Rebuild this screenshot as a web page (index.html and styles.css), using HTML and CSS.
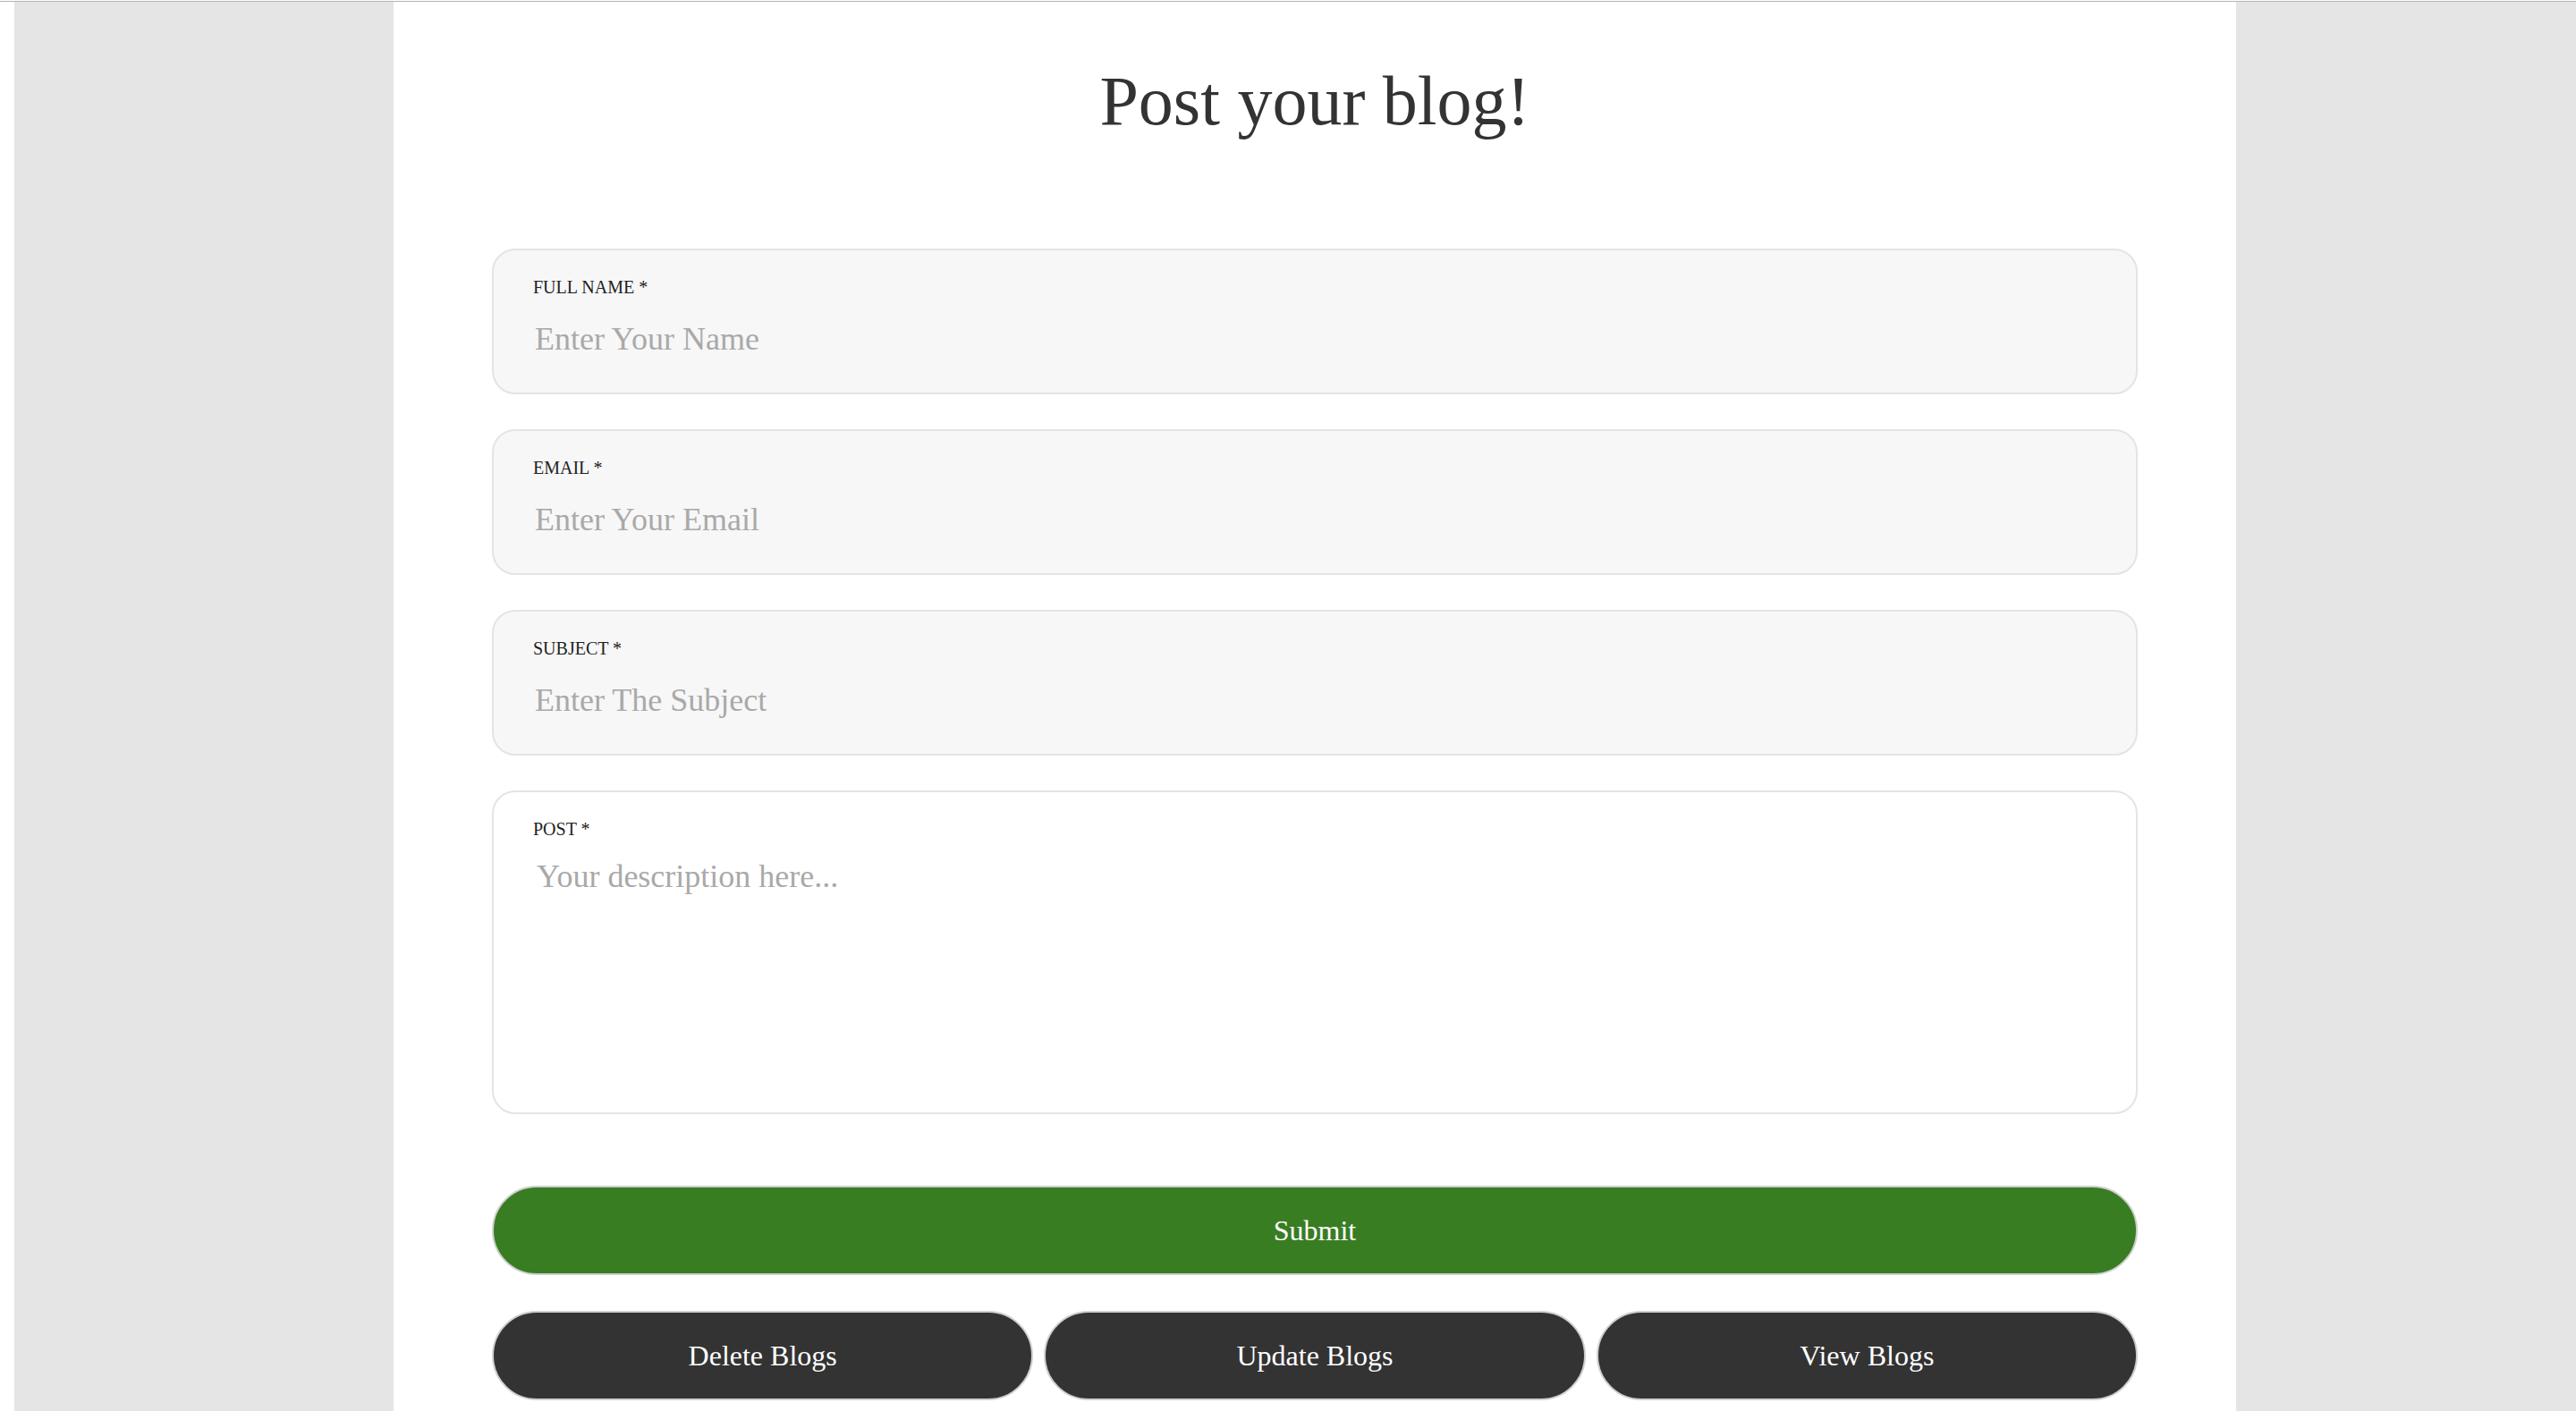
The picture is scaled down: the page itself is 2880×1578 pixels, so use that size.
FILE: index.html
```html
<!DOCTYPE html>
<html lang="en">
<head>
<meta charset="utf-8">
<title>Post your blog!</title>
<link rel="stylesheet" href="styles.css">
</head>
<body>
<div class="topline"></div>
<div class="page">
  <div class="side side-left"></div>
  <main class="panel">
    <h1 class="title">Post your blog!</h1>
    <form class="form">
      <div class="field">
        <label class="label" for="name">FULL NAME *</label>
        <input class="input" id="name" type="text" placeholder="Enter Your Name">
      </div>
      <div class="field">
        <label class="label" for="email">EMAIL *</label>
        <input class="input" id="email" type="email" placeholder="Enter Your Email">
      </div>
      <div class="field">
        <label class="label" for="subject">SUBJECT *</label>
        <input class="input" id="subject" type="text" placeholder="Enter The Subject">
      </div>
      <div class="field field-post">
        <label class="label" for="post">POST *</label>
        <textarea class="textarea" id="post" placeholder="Your description here..."></textarea>
      </div>
      <button class="btn btn-submit" type="button">Submit</button>
      <div class="actions">
        <button class="btn btn-dark" type="button">Delete Blogs</button>
        <button class="btn btn-dark" type="button">Update Blogs</button>
        <button class="btn btn-dark" type="button">View Blogs</button>
      </div>
    </form>
  </main>
  <div class="side side-right"></div>
</div>
</body>
</html>
```
FILE: styles.css
```css
html, body {
  margin: 0;
  padding: 0;
  background: #ffffff;
  font-family: "Liberation Serif", "Times New Roman", serif;
}

.topline {
  height: 1px;
  margin-top: 1px;
  background: #b5b5b5;
}

.page {
  display: grid;
  grid-template-columns: 424px 2060px 1fr;
  margin-left: 16px;
  min-height: 1576px;
}

.side {
  background: #e5e5e5;
}

.panel {
  background: #ffffff;
  padding: 0 110px;
}

.title {
  margin: 69px 0 0;
  font-size: 78px;
  font-weight: normal;
  line-height: 84px;
  text-align: center;
  color: #333333;
}

.form {
  margin-top: 123px;
  display: flex;
  flex-direction: column;
}

.field {
  box-sizing: border-box;
  height: 163px;
  padding: 30px 44px 0;
  border: 2px solid #e4e4e4;
  border-radius: 26px;
  background: #f7f7f7;
  margin-bottom: 39px;
}

.field-post {
  height: 362px;
  background: #ffffff;
  display: flex;
  flex-direction: column;
  margin-bottom: 80px;
}

.label {
  display: block;
  font-size: 20px;
  line-height: 23px;
  color: #222222;
}

.input {
  display: block;
  box-sizing: border-box;
  width: 100%;
  height: 41px;
  margin: 26px 0 0;
  padding: 0 2px;
  border: none;
  outline: none;
  background: transparent;
  font-family: "Liberation Serif", "Times New Roman", serif;
  font-size: 36px;
  line-height: 41px;
  color: #333333;
}

.textarea {
  flex: 1;
  display: block;
  box-sizing: border-box;
  width: 100%;
  margin: 19px 0 0;
  padding: 2px 4px;
  border: none;
  outline: none;
  resize: none;
  background: transparent;
  font-family: "Liberation Serif", "Times New Roman", serif;
  font-size: 36px;
  line-height: 41px;
  color: #333333;
}

.input::placeholder,
.textarea::placeholder {
  color: #a9a9a9;
  opacity: 1;
}

.btn {
  box-sizing: border-box;
  height: 100px;
  border: 2px solid #cfcfcf;
  border-radius: 50px;
  font-family: "Liberation Serif", "Times New Roman", serif;
  font-size: 32px;
  color: #ffffff;
  cursor: pointer;
  padding: 0;
}

.btn-submit {
  width: 100%;
  background: #397d23;
}

.actions {
  display: grid;
  grid-template-columns: repeat(3, 1fr);
  gap: 12px;
  margin-top: 40px;
}

.btn-dark {
  background: #333333;
}
```
